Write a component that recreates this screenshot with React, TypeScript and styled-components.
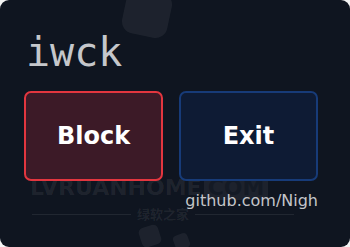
import styled, { createGlobalStyle } from "styled-components";

const Global = createGlobalStyle`
  html, body {
    margin: 0;
    background: #f4f4f4;
  }
`;

const Panel = styled.main`
  position: relative;
  width: 350px;
  height: 247px;
  box-sizing: border-box;
  background: #0f1520;
  border-radius: 9px;
  overflow: hidden;
  padding: 28px 32px 0 24px;
  display: flex;
  flex-direction: column;
`;

const Title = styled.h1`
  margin: 0 0 0 2px;
  font-family: "DejaVu Sans Mono", monospace;
  font-weight: normal;
  font-size: 40px;
  line-height: 48px;
  color: #c5c7cb;
  position: relative;
  z-index: 1;
`;

const Buttons = styled.div`
  display: grid;
  grid-template-columns: 139px 139px;
  gap: 16px;
  margin-top: 15px;
  position: relative;
  z-index: 1;
`;

const Button = styled.button<{ $tone: "red" | "blue" }>`
  height: 90px;
  box-sizing: border-box;
  border-radius: 7px;
  border: 2px solid ${({ $tone }) => ($tone === "red" ? "#e3363f" : "#173b78")};
  background: ${({ $tone }) => ($tone === "red" ? "#3c1a27" : "#0e1b34")};
  color: #ffffff;
  font-family: "DejaVu Sans", sans-serif;
  font-weight: bold;
  font-size: 24px;
  cursor: pointer;
`;

const Link = styled.div`
  align-self: flex-end;
  margin-top: 11px;
  font-family: "DejaVu Sans", sans-serif;
  font-size: 16px;
  line-height: 17px;
  color: #c3c5c9;
  position: relative;
  z-index: 1;
`;

/* faint watermark left on the screenshot */
const Mark = styled.div`
  position: absolute;
  left: 30px;
  top: 176px;
  display: flex;
  align-items: center;
  font-family: "DejaVu Sans", sans-serif;
  font-weight: bold;
  font-size: 22px;
  line-height: 24px;
  color: rgba(255, 255, 255, 0.07);
`;

const MarkBox = styled.span`
  background: rgba(255, 255, 255, 0.06);
  color: rgba(15, 21, 32, 0.6);
  padding: 0 4px;
  margin-left: 2px;
`;

const MarkLine = styled.div`
  position: absolute;
  left: 32px;
  right: 56px;
  top: 206px;
  display: flex;
  align-items: center;
  gap: 6px;
  font-family: "Noto Sans CJK SC", sans-serif;
  font-weight: bold;
  font-size: 13px;
  line-height: 16px;
  color: rgba(255, 255, 255, 0.08);

  &::before,
  &::after {
    content: "";
    flex: 1;
    height: 1px;
    background: rgba(255, 255, 255, 0.08);
  }
`;

const Tile = styled.div<{ $x: number; $y: number; $s: number; $r: number }>`
  position: absolute;
  left: ${({ $x }) => $x}px;
  top: ${({ $y }) => $y}px;
  width: ${({ $s }) => $s}px;
  height: ${({ $s }) => $s}px;
  border-radius: ${({ $s }) => Math.round($s / 4)}px;
  background: rgba(255, 255, 255, 0.06);
  transform: rotate(${({ $r }) => $r}deg);
`;

export default function App() {
  return (
    <>
      <Global />
      <Panel>
        <Tile $x={124} $y={-10} $s={46} $r={12} />
        <Tile $x={140} $y={226} $s={20} $r={-18} />
        <Tile $x={174} $y={234} $s={15} $r={-20} />
        <Mark>
          LVRUANHOME<MarkBox>COM</MarkBox>
        </Mark>
        <MarkLine>绿软之家</MarkLine>
        <Title>iwck</Title>
        <Buttons>
          <Button $tone="red">Block</Button>
          <Button $tone="blue">Exit</Button>
        </Buttons>
        <Link>github.com/Nigh</Link>
      </Panel>
    </>
  );
}
